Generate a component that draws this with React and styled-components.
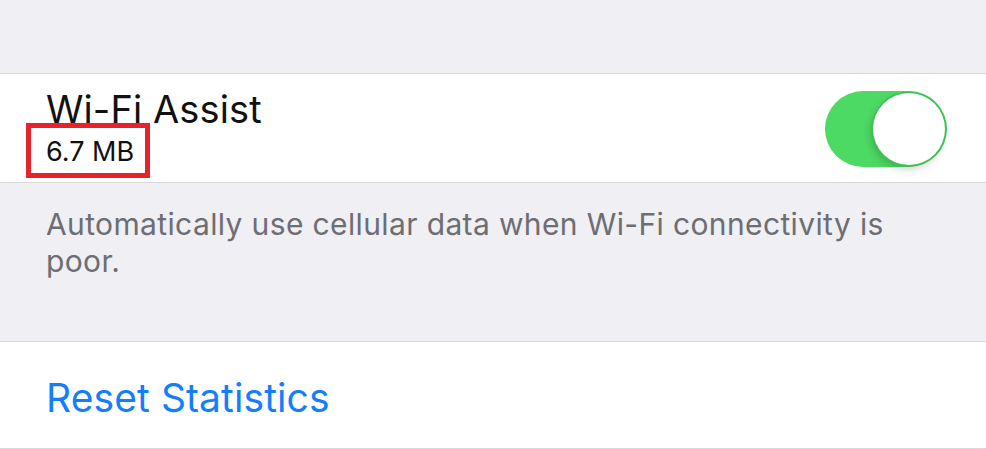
import React from 'react'
import styled, { createGlobalStyle } from 'styled-components'

const GlobalStyle = createGlobalStyle`
  html, body {
    margin: 0;
    padding: 0;
    background: #efeff4;
    font-family: Inter, "Liberation Sans", Arial, sans-serif;
    -webkit-font-smoothing: antialiased;
  }
`

const Page = styled.div`
  width: 986px;
  height: 449px;
  overflow: hidden;
  background: #efeff4;
`

const TopGap = styled.div`
  height: 73px;
`

const Cell = styled.div`
  display: flex;
  align-items: flex-start;
  justify-content: space-between;
  box-sizing: border-box;
  height: ${(p) => p.$height}px;
  padding: ${(p) => p.$pad};
  background: #ffffff;
  border-top: 1px solid #d9d9de;
  border-bottom: 1px solid #d9d9de;
`

const Labels = styled.div`
  display: flex;
  flex-direction: column;
  align-items: flex-start;
  padding-top: 16px;
`

const Title = styled.div`
  font-size: 38px;
  line-height: 38px;
  letter-spacing: 0.1px;
  color: #111111;
`

const Detail = styled.div`
  margin: -5px 0 0 -20px;
  padding: 10px 11px 8px 15px;
  border: 5px solid #e8212a;
  font-size: 27px;
  line-height: 27px;
  color: #111111;
`

const Switch = styled.div`
  align-self: center;
  display: flex;
  justify-content: flex-end;
  align-items: center;
  box-sizing: border-box;
  width: 122px;
  height: 76px;
  margin: 2px 39px 0 0;
  padding: 2px;
  border-radius: 38px;
  background: #4cd964;
`

const Knob = styled.div`
  width: 72px;
  height: 72px;
  border-radius: 50%;
  background: #ffffff;
  box-shadow: 0 0 0 1.5px #3fbf54, -2px 4px 8px rgba(0, 0, 0, 0.2);
`

const Footer = styled.div`
  box-sizing: border-box;
  height: 158px;
  padding: 23px 90px 0 46px;
  font-size: 30px;
  line-height: 37px;
  letter-spacing: 0.37px;
  color: #6d6d72;
`

const Action = styled.div`
  font-size: 39px;
  line-height: 44px;
  letter-spacing: 0.1px;
  color: #147efb;
`

export default function App() {
  return (
    <Page>
      <GlobalStyle />
      <TopGap />
      <Cell $height={110} $pad="0 0 0 46px">
        <Labels>
          <Title>Wi-Fi Assist</Title>
          <Detail>6.7 MB</Detail>
        </Labels>
        <Switch>
          <Knob />
        </Switch>
      </Cell>
      <Footer>
        Automatically use cellular data when Wi-Fi connectivity is poor.
      </Footer>
      <Cell $height={108} $pad="34px 0 0 46px">
        <Action>Reset Statistics</Action>
      </Cell>
    </Page>
  )
}
